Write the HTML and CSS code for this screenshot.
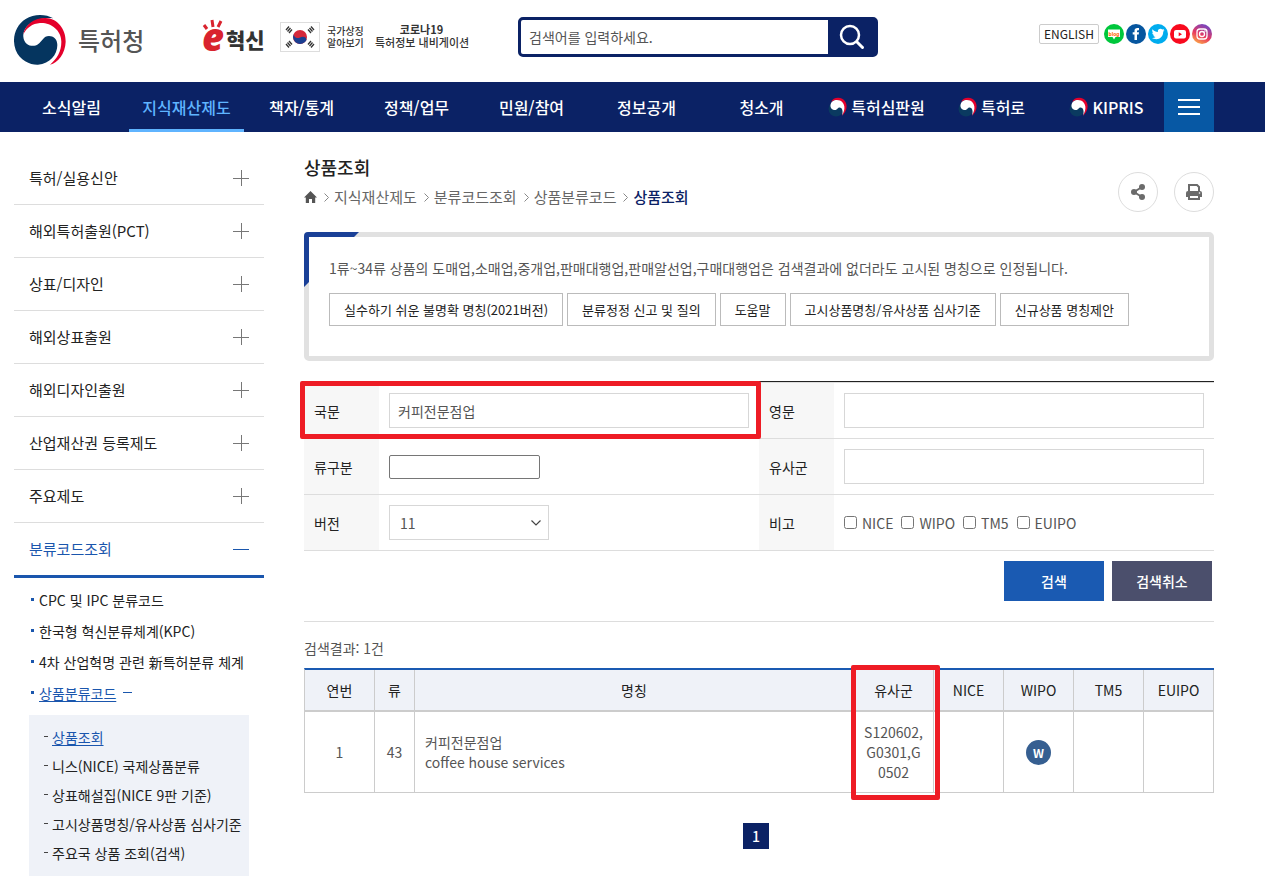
FILE: index.html
```html
<!DOCTYPE html>
<html lang="ko">
<head>
<meta charset="utf-8">
<meta name="viewport" content="width=device-width, initial-scale=1">
<title>상품조회 | 특허청</title>
<link rel="stylesheet" href="styles.css">
</head>
<body>
<svg class="defs" aria-hidden="true">
  <symbol id="taegeuk" viewBox="0 0 156 150">
    <path fill="#05355f" d="M118 10C95-3 60-4 35 12C5 30-8 70 5 105C18 138 50 150 72 149C108 147 130 118 130 90C130 72 118 63 105 63C88 63 86 78 72 88C58 98 30 92 28 65C26 45 42 22 72 14C90 8 105 8 118 10Z"/>
    <path fill="#e4002b" d="M28 58C32 30 60 8 95 9C130 10 156 42 155 80C154 115 132 143 108 149C130 130 142 108 142 80C142 45 110 22 78 24C55 26 38 38 28 58Z"/>
  </symbol>
  <symbol id="taegeuk-s" viewBox="0 0 20 20">
    <ellipse cx="8" cy="12" rx="7.500" ry="7.500" fill="#0a3a60"/>
    <path fill="#e4002b" d="M3 5C5 0 14-1 17.500 5C20 10 18 15 14 19C16 14 16 9 13 6C10 3 6 3 3 5Z"/>
    <path fill="#fff" d="M2.500 8C3 3.500 8 2 12 3.500C17 6 18 12 14 18.500C15.500 14 14 10.500 11.500 10.500C9.500 10.500 9.500 13 7 13C4.500 13 2 11 2.500 8Z"/>
  </symbol>
  <symbol id="plus" viewBox="0 0 16 16"><path d="M0 8.500H16M8.500 0V16" fill="none" stroke="#777"/></symbol>
  <symbol id="chev" viewBox="0 0 5 9"><path d="M.5.5L4.500 4.500L.5 8.500" fill="none" stroke="#888"/></symbol>
</svg>

<header class="top">
  <a class="logo" href="#"><svg class="logo-mark" aria-hidden="true"><use href="#taegeuk"/></svg><span>특허청</span></a>
  <a class="innov" href="#" aria-label="e혁신">
    <svg width="64" height="36" viewBox="0 0 64 36" aria-hidden="true">
      <path d="M2 7L5 11M10 2L11 9M19 3L16 9" stroke="#d9232e" stroke-width="3" fill="none"/>
      <text class="innov-e" x="0" y="33">e</text>
      <text class="innov-k" x="24" y="30">혁신</text>
    </svg>
  </a>
  <a class="symbol" href="#">
    <svg class="flag" viewBox="0 0 38 28" aria-hidden="true">
      <circle cx="19" cy="14" r="7" fill="#d5273a"/>
      <path d="M12.800 11C12.500 14 15.500 16 19 14.500C22 13 25.500 14 25.500 17A7 7 0 0 1 12.800 11Z" fill="#1b3f91"/>
      <g stroke="#333" stroke-width="1.300">
        <path d="M5 7L8 3.500M6.500 8.500L9.500 5M8 10L11 6.500"/>
        <path d="M33 7L30 3.500M31.500 8.500L28.500 5M30 10L27 6.500"/>
        <path d="M5 21L8 24.500M6.500 19.500L9.500 23M8 18L11 21.500"/>
        <path d="M33 21L30 24.500M31.500 19.500L28.500 23M30 18L27 21.500"/>
      </g>
    </svg>
    <span>국가상징<br>알아보기</span>
  </a>
  <a class="covid" href="#"><b>코로나19</b><br>특허정보 내비게이션</a>
  <form class="search" role="search">
    <input type="text" aria-label="검색어" placeholder="검색어를 입력하세요.">
    <button type="button" aria-label="검색">
      <svg width="26" height="26" viewBox="0 0 26 26" fill="none" stroke="#fff" aria-hidden="true"><circle cx="11" cy="11" r="9" stroke-width="2.500"/><path d="M18 18L23.500 23.500" stroke-width="3" stroke-linecap="round"/></svg>
    </button>
  </form>
  <div class="links">
    <a class="english" href="#">ENGLISH</a>
    <a href="#" aria-label="블로그"><svg viewBox="0 0 20 20"><circle cx="10" cy="10" r="10" fill="#00c73c"/><path d="M4 5.500H16V13H11.500L10 15.500L8.500 13H4Z" fill="#fff"/><text class="blog" x="10" y="11.500">blog</text></svg></a>
    <a href="#" aria-label="페이스북"><svg viewBox="0 0 20 20"><circle cx="10" cy="10" r="10" fill="#07569f"/><path d="M8.500 16V10.500H6.700V8.200H8.500V6.700C8.500 4.700 9.600 3.900 11.300 3.900H13V6.200H12C11.300 6.200 11 6.500 11 7.100V8.200H13L12.700 10.500H11V16Z" fill="#fff"/></svg></a>
    <a href="#" aria-label="트위터"><svg viewBox="0 0 20 20"><circle cx="10" cy="10" r="10" fill="#00acee"/><path d="M4.500 5.300C6 7 7.800 7.900 9.900 8C9.500 5.800 11 4.800 12.400 4.800C13.200 4.800 13.900 5.100 14.300 5.600L16 5L15.300 6.500L16.500 6.300L15.200 7.700C15.300 12 12.300 15.200 8.200 15.200C6.600 15.200 5.100 14.700 4 14C5.400 14.100 6.600 13.800 7.600 13C6.400 12.900 5.600 12.200 5.300 11.200H6.300C5 10.800 4.300 9.900 4.200 8.600L5.300 8.900C4.200 8 3.900 6.600 4.500 5.300Z" fill="#fff"/></svg></a>
    <a href="#" aria-label="유튜브"><svg viewBox="0 0 20 20"><circle cx="10" cy="10" r="10" fill="#f80a1e"/><rect x="4" y="6" width="12" height="8.500" rx="2" fill="#fff"/><path d="M8.700 8.200L12 10.200L8.700 12.200Z" fill="#f80a1e"/></svg></a>
    <a href="#" aria-label="인스타그램"><svg viewBox="0 0 20 20"><defs><linearGradient id="ig" x1="0.200" y1="1" x2="0.700" y2="0"><stop offset="0" stop-color="#fdb246"/><stop offset=".45" stop-color="#e8395f"/><stop offset="1" stop-color="#6d47c8"/></linearGradient></defs><circle cx="10" cy="10" r="10" fill="url(#ig)"/><g fill="none" stroke="#fff" stroke-width="1.300"><rect x="5" y="5" width="10" height="10" rx="3"/><circle cx="10" cy="10" r="2.500"/></g><circle cx="13" cy="7" r=".8" fill="#fff"/></svg></a>
  </div>
</header>

<nav class="gnb">
  <ul>
    <li><a href="#">소식알림</a></li>
    <li class="on"><a href="#">지식재산제도</a></li>
    <li><a href="#">책자/통계</a></li>
    <li><a href="#">정책/업무</a></li>
    <li><a href="#">민원/참여</a></li>
    <li><a href="#">정보공개</a></li>
    <li><a href="#">청소개</a></li>
    <li><a href="#"><svg aria-hidden="true"><use href="#taegeuk-s"/></svg>특허심판원</a></li>
    <li><a href="#"><svg aria-hidden="true"><use href="#taegeuk-s"/></svg>특허로</a></li>
    <li><a href="#"><svg aria-hidden="true"><use href="#taegeuk-s"/></svg>KIPRIS</a></li>
  </ul>
  <button type="button" class="all" aria-label="전체메뉴"><svg width="22" height="18" viewBox="0 0 22 18"><path d="M0 2H22M0 9H22M0 16H22" stroke="#fff" stroke-width="2"/></svg></button>
</nav>

<div class="page">
  <aside class="side">
    <ul class="lnb">
      <li><a href="#">특허/실용신안<svg><use href="#plus"/></svg></a></li>
      <li><a href="#">해외특허출원(PCT)<svg><use href="#plus"/></svg></a></li>
      <li><a href="#">상표/디자인<svg><use href="#plus"/></svg></a></li>
      <li><a href="#">해외상표출원<svg><use href="#plus"/></svg></a></li>
      <li><a href="#">해외디자인출원<svg><use href="#plus"/></svg></a></li>
      <li><a href="#">산업재산권 등록제도<svg><use href="#plus"/></svg></a></li>
      <li><a href="#">주요제도<svg><use href="#plus"/></svg></a></li>
      <li class="open"><a href="#">분류코드조회<svg viewBox="0 0 16 16"><path d="M0 8.500H16" stroke="#1a56ad"/></svg></a></li>
    </ul>
    <ul class="sub">
      <li><a href="#">CPC 및 IPC 분류코드</a></li>
      <li><a href="#">한국형 혁신분류체계(KPC)</a></li>
      <li><a href="#">4차 산업혁명 관련 新특허분류 체계</a></li>
      <li class="cur"><a href="#">상품분류코드</a></li>
    </ul>
    <ul class="leaf">
      <li class="cur"><a href="#">상품조회</a></li>
      <li><a href="#">니스(NICE) 국제상품분류</a></li>
      <li><a href="#">상표해설집(NICE 9판 기준)</a></li>
      <li><a href="#">고시상품명칭/유사상품 심사기준</a></li>
      <li><a href="#">주요국 상품 조회(검색)</a></li>
    </ul>
  </aside>

  <main class="main">
    <div class="head">
      <div>
        <h1>상품조회</h1>
        <nav class="crumb" aria-label="현재 위치">
          <a href="#" aria-label="홈"><svg width="13" height="12" viewBox="0 0 13 12"><path d="M6.500 0L13 6.500H11.200V12H8V8H5V12H1.800V6.500H0Z" fill="#555"/></svg></a>
          <svg class="chev"><use href="#chev"/></svg><a href="#">지식재산제도</a>
          <svg class="chev"><use href="#chev"/></svg><a href="#">분류코드조회</a>
          <svg class="chev"><use href="#chev"/></svg><a href="#">상품분류코드</a>
          <svg class="chev"><use href="#chev"/></svg><a class="here" href="#">상품조회</a>
        </nav>
      </div>
      <div class="tools">
        <button type="button" aria-label="공유"><svg width="16" height="18" viewBox="0 0 16 18"><path d="M12 4L4 9L12 14" fill="none" stroke="#6b6b6b" stroke-width="2"/><g fill="#6b6b6b"><circle cx="12" cy="4" r="3"/><circle cx="4" cy="9" r="3"/><circle cx="12" cy="14" r="3"/></g></svg></button>
        <button type="button" aria-label="인쇄"><svg width="16" height="16" viewBox="0 0 16 16"><path d="M3 7V1H11L13 3V7" fill="none" stroke="#6b6b6b" stroke-width="2"/><path d="M2 7H14Q16 7 16 9V13H0V9Q0 7 2 7Z" fill="#6b6b6b"/><path d="M3 11H13V15H3Z" fill="#fff" stroke="#6b6b6b" stroke-width="2"/><circle cx="13.500" cy="9" r=".8" fill="#fff"/></svg></button>
      </div>
    </div>

    <section class="info">
      <svg class="corner" viewBox="0 0 55 55" aria-hidden="true"><path d="M0 55V4Q0 0 4 0H55L50 5H5V50Z" fill="#1a4097"/></svg>
      <p>1류~34류 상품의 도매업,소매업,중개업,판매대행업,판매알선업,구매대행업은 검색결과에 없더라도 고시된 명칭으로 인정됩니다.</p>
      <div class="pills">
        <a href="#">실수하기 쉬운 불명확 명칭(2021버전)</a>
        <a href="#">분류정정 신고 및 질의</a>
        <a href="#">도움말</a>
        <a href="#">고시상품명칭/유사상품 심사기준</a>
        <a href="#">신규상품 명칭제안</a>
      </div>
    </section>

    <form class="query">
      <div class="marked">
        <table class="fields">
          <colgroup><col class="w75"><col><col class="w75"><col></colgroup>
          <tr>
            <th scope="row"><label for="ko">국문</label></th>
            <td><input class="text" id="ko" type="text" value="커피전문점업"></td>
            <th scope="row"><label for="en">영문</label></th>
            <td><input class="text" id="en" type="text"></td>
          </tr>
          <tr>
            <th scope="row"><label for="cls">류구분</label></th>
            <td><input class="plain" id="cls" type="text"></td>
            <th scope="row"><label for="grp">유사군</label></th>
            <td><input class="text" id="grp" type="text"></td>
          </tr>
          <tr>
            <th scope="row"><label for="ver">버전</label></th>
            <td><span class="pick"><select id="ver"><option>11</option></select><svg width="10" height="6" viewBox="0 0 10 6" aria-hidden="true"><path d="M.5.5L5 5L9.500.5" fill="none" stroke="#444" stroke-width="1.200"/></svg></span></td>
            <th scope="row">비고</th>
            <td><div class="checks">
              <label><input type="checkbox">NICE</label>
              <label><input type="checkbox">WIPO</label>
              <label><input type="checkbox">TM5</label>
              <label><input type="checkbox">EUIPO</label>
            </div></td>
          </tr>
        </table>
        <div class="mark mark-field"></div>
      </div>
      <div class="actions">
        <button type="button" class="go">검색</button>
        <button type="button" class="cancel">검색취소</button>
      </div>
    </form>

    <p class="count">검색결과: 1건</p>
    <div class="marked">
      <table class="result">
        <colgroup><col class="w70"><col class="w40"><col><col class="w80"><col class="w70"><col class="w70"><col class="w70"><col class="w70"></colgroup>
        <thead><tr><th>연번</th><th>류</th><th>명칭</th><th>유사군</th><th>NICE</th><th>WIPO</th><th>TM5</th><th>EUIPO</th></tr></thead>
        <tbody><tr>
          <td>1</td><td>43</td>
          <td class="name">커피전문점업<br>coffee house services</td>
          <td>S120602,<br>G0301,G<br>0502</td>
          <td></td><td><span class="w">W</span></td><td></td><td></td>
        </tr></tbody>
      </table>
      <div class="mark mark-col"></div>
    </div>
    <div class="pager"><a href="#" aria-current="page">1</a></div>
  </main>
</div>
</body>
</html>
```

FILE: styles.css
```css
* { box-sizing: border-box; }
body {
  margin: 0;
  background: #fff;
  color: #555;
  font: 14px/20px "Noto Sans CJK KR", "Noto Sans", sans-serif;
}
a { color: inherit; text-decoration: none; }
ul { margin: 0; padding: 0; list-style: none; }
p, h1 { margin: 0; }
button, input, select { font: inherit; color: inherit; margin: 0; }
button { border: 0; padding: 0; cursor: pointer; }
svg { display: block; flex: none; }
.defs { position: absolute; width: 0; height: 0; }

/* header */
.top {
  display: flex;
  align-items: flex-start;
  height: 82px;
  padding: 0 53px 0 14px;
  white-space: nowrap;
}
.logo {
  display: flex;
  align-items: center;
  gap: 12px;
  margin-top: 14px;
  width: 188px;
  color: #555;
  font-size: 24px;
  line-height: 52px;
  font-weight: 500;
}
.logo-mark { width: 52px; height: 50px; }
.innov { margin-top: 18px; width: 78px; }
.innov svg { overflow: visible; }
.innov-e { font: italic 900 38px "Noto Sans", sans-serif; fill: #d9232e; }
.innov-k { font: 900 21px "Noto Sans CJK KR", sans-serif; fill: #333; }
.symbol {
  display: flex;
  align-items: center;
  gap: 7px;
  margin-top: 22px;
  width: 95px;
  color: #333;
  font-size: 10px;
  line-height: 12px;
  font-weight: 500;
}
.flag { width: 40px; height: 30px; border: 1px solid #ddd; }
.covid {
  margin-top: 23px;
  width: 93px;
  color: #333;
  font-size: 11px;
  line-height: 13px;
  font-weight: 500;
  text-align: center;
}
.search {
  display: flex;
  margin: 17px 0 0 50px;
  width: 360px;
  height: 40px;
  border: 3px solid #0b2265;
  border-radius: 5px;
  background: #0b2265;
}
.search input {
  flex: 1;
  min-width: 0;
  border: 0;
  border-radius: 2px 0 0 2px;
  padding: 0 8px;
  background: #fff;
  outline: 0;
}
.search input::placeholder { color: #555; opacity: 1; }
.search button {
  display: flex;
  align-items: center;
  justify-content: center;
  width: 47px;
  background: none;
}
.links { display: flex; gap: 2px; margin: 24px 0 0 auto; }
.links svg { width: 20px; height: 20px; }
.english {
  margin-right: 3px;
  width: 60px;
  height: 20px;
  border: 1px solid #ccc;
  border-radius: 2px;
  color: #222;
  font-size: 12px;
  line-height: 18px;
  text-align: center;
}
.blog { font: 700 5px "Noto Sans", sans-serif; fill: #f60; text-anchor: middle; }

/* main navigation */
.gnb { display: flex; padding: 0 51px 0 14px; background: #0b2265; }
.gnb ul { display: flex; flex: 1; }
.gnb li { flex: 1 1 0; min-width: 0; }
.gnb a {
  display: flex;
  align-items: center;
  justify-content: center;
  gap: 3px;
  height: 50px;
  color: #fff;
  font-size: 16px;
  font-weight: 500;
  white-space: nowrap;
}
.gnb a svg { width: 20px; height: 20px; }
.gnb .on a { color: #5fb4ff; box-shadow: inset 0 -3px #5fb4ff; }
.all {
  display: flex;
  align-items: center;
  justify-content: center;
  width: 50px;
  background: #0758a4;
}

/* page columns */
.page { display: flex; gap: 40px; padding: 20px 51px 0 14px; }
.side { flex: none; width: 250px; color: #222; }
.main { flex: 1; min-width: 0; }

.lnb a {
  display: flex;
  align-items: center;
  justify-content: space-between;
  height: 53px;
  padding: 0 15px;
  border-bottom: 1px solid #ddd;
  font-size: 15px;
}
.lnb svg { width: 16px; height: 16px; }
.lnb .open a { height: 55px; border-bottom: 3px solid #1a56ad; color: #1a56ad; }
.sub { padding: 6px 0 7px 17px; white-space: nowrap; }
.sub li { display: flex; align-items: center; height: 31px; }
.sub li::before { content: ""; width: 3px; height: 3px; margin-right: 5px; background: #1a56ad; }
.cur { color: #1a56ad; }
.cur a { text-decoration: underline; text-underline-offset: 2px; }
.sub .cur::after { content: ""; width: 9px; height: 1px; margin-left: 7px; background: #1a56ad; }
.leaf { margin: 0 15px; padding: 7px 0 9px 15px; background: #eff2f8; white-space: nowrap; }
.leaf li { display: flex; align-items: center; height: 29px; }
.leaf li::before { content: ""; width: 4px; height: 1px; margin-right: 4px; background: #444; }

/* title */
.head { display: flex; justify-content: space-between; height: 80px; }
.head h1 { color: #222; font-size: 18px; line-height: 30px; font-weight: 500; }
.crumb { display: flex; align-items: center; gap: 5px; margin-top: 4px; font-size: 15px; line-height: 22px; color: #666; }
.chev { width: 5px; height: 9px; margin-left: 2px; }
.crumb .here { color: #0b2265; font-weight: 500; }
.tools { display: flex; gap: 16px; margin-top: 20px; }
.tools button {
  display: flex;
  align-items: center;
  justify-content: center;
  width: 40px;
  height: 40px;
  border: 1px solid #ddd;
  border-radius: 50%;
  background: #fff;
}

/* notice */
.info {
  position: relative;
  padding: 20px 20px 30px;
  border: 5px solid #e1e1e1;
  border-radius: 5px;
}
.corner { position: absolute; left: -5px; top: -5px; width: 55px; height: 55px; }
.info p { line-height: 22px; }
.pills { display: flex; flex-wrap: wrap; gap: 4px; margin-top: 14px; font-size: 13px; }
.pills a {
  padding: 0 14px;
  border: 1px solid #bbb;
  color: #222;
  line-height: 31px;
}

/* query form */
.marked { position: relative; }
.mark { position: absolute; border: 5px solid #ee1c25; border-radius: 2px; pointer-events: none; }
.mark-field { left: -4px; right: calc(50% - 2px); top: 0; height: 58px; }
.mark-col { right: 274px; width: 89px; top: -3px; bottom: -7px; }
.query { margin-top: 20px; padding-bottom: 20px; border-bottom: 1px solid #ddd; }
.fields, .result { width: 100%; border-spacing: 0; table-layout: fixed; }
.fields { border-top: 1px solid #222; }
.fields tr:first-child > * { border-top: 1px solid #ddd; }
.fields th, .fields td { height: 56px; padding: 0 10px; border-bottom: 1px solid #ddd; text-align: left; }
.fields tr:first-child > * { height: 57px; }
.fields th { background: #f7f7f7; color: #222; font-weight: 400; }
.w75 { width: 75px; }
.w70 { width: 70px; }
.w40 { width: 40px; }
.w80 { width: 80px; }
.text, .plain, .pick select { display: block; background: #fff; }
.text { width: 100%; height: 35px; border: 1px solid #d7d7d7; padding: 0 8px; }
.plain { width: 151px; height: 24px; border: 1px solid #767676; border-radius: 2px; padding: 0 2px; }
.pick { display: grid; align-items: center; width: 160px; }
.pick > * { grid-area: 1 / 1; }
.pick select { appearance: none; width: 100%; height: 35px; border: 1px solid #d7d7d7; border-radius: 0; padding: 0 10px; }
.pick svg { justify-self: end; margin-right: 8px; pointer-events: none; }
.checks { display: flex; gap: 8px; }
.checks label { display: flex; align-items: center; gap: 5px; }
.checks input { width: 13px; height: 13px; }
.actions { display: flex; justify-content: flex-end; gap: 8px; margin-top: 10px; padding-right: 2px; }
.actions button { width: 100px; height: 40px; color: #fff; font-weight: 500; }
.go { background: #1a5ab2; }
.cancel { background: #4b4f6c; }

/* results */
.count { margin: 15px 0 9px; line-height: 22px; }
.result { border-top: 2px solid #1a5ab2; border-left: 1px solid #ccc; text-align: center; }
.result th, .result td { border-right: 1px solid #ccc; border-bottom: 1px solid #ccc; }
.result th { height: 42px; padding: 0; border-bottom-width: 2px; background: #eff2f8; color: #222; font-weight: 400; }
.result td { height: 81px; padding: 0 8px; }
.result .name { padding: 0 10px; text-align: left; }
.w {
  display: block;
  margin: 0 auto;
  width: 25px;
  height: 25px;
  border-radius: 50%;
  background: #365f91;
  color: #fff;
  font-size: 12px;
  line-height: 25px;
  font-weight: 700;
}
.pager { display: flex; justify-content: center; margin-top: 30px; padding-right: 6px; }
.pager a { width: 26px; height: 26px; background: #0b2265; color: #fff; line-height: 26px; text-align: center; font-weight: 500; }
```
